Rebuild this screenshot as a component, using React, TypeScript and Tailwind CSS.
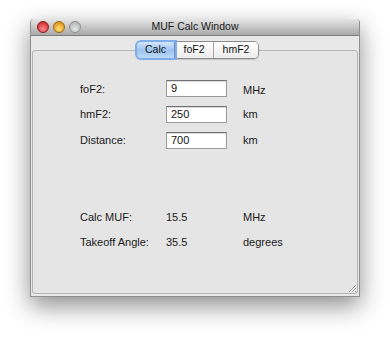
import React from "react";

const font = { fontFamily: '"Liberation Sans", Arial, sans-serif' };

function Light({ from, to, border }: { from: string; to: string; border: string }) {
  return (
    <div
      className="w-[12px] h-[12px] rounded-full border"
      style={{ background: `radial-gradient(circle at 50% 70%, ${to}, ${from})`, borderColor: border }}
    />
  );
}

function Field({ value }: { value: string }) {
  return (
    <div className="w-[61px] h-[17px] bg-white border border-[#9a9a9a] border-t-[#707070] shadow-[inset_0_1px_1px_rgba(0,0,0,0.15)] flex items-center px-[4px] text-[11px] text-[#111]">
      {value}
    </div>
  );
}

export default function App() {
  return (
    <div className="w-[390px] h-[339px] bg-white overflow-hidden" style={font}>
      <div className="ml-[30px] mt-[19px] w-[330px] h-[278px] flex flex-col bg-[#e8e8e8] rounded-t-[4px] shadow-[0_9px_24px_rgba(0,0,0,0.45)] border-x border-b border-[#8f8f8f]">
        {/* title bar */}
        <div className="h-[17px] relative flex items-center rounded-t-[4px] bg-gradient-to-b from-[#e6e6e6] to-[#a9a9a9] border-b border-[#7d7d7d]">
          <div className="flex gap-[4px] pl-[6px] items-center">
            <Light from="#c0141a" to="#ff8a8a" border="#8a1a1a" />
            <Light from="#d47e00" to="#ffe27a" border="#9a6a10" />
            <Light from="#a8a8a8" to="#e8e8e8" border="#8d8d8d" />
          </div>
          <div className="absolute inset-0 flex items-center justify-center text-[10.5px] text-[#1a1a1a]">
            MUF Calc Window
          </div>
        </div>
        {/* body */}
        <div className="flex-1 flex flex-col pt-[14px] px-[1px] pb-[2px]">
          <div className="relative flex-1 border border-[#b3b3b3] rounded-[3px] bg-[#e5e5e5]">
            {/* segmented tabs */}
            <div className="absolute left-[103px] -top-[10px] flex h-[18px] rounded-[5px] border border-[#8a8a8a] overflow-visible text-[10.5px] text-[#111] shadow-[0_1px_1px_rgba(0,0,0,0.15)]">
              <div className="w-[38px] flex items-center justify-center rounded-l-[4px] bg-gradient-to-b from-[#d4e6fa] via-[#9cc4f0] to-[#bcd9f8] ring-2 ring-[#7eadea] relative z-10 border-r border-[#6d8fbf]">
                Calc
              </div>
              <div className="w-[39px] flex items-center justify-center bg-gradient-to-b from-white to-[#ececec] border-r border-[#a5a5a5]">
                foF2
              </div>
              <div className="w-[44px] flex items-center justify-center rounded-r-[4px] bg-gradient-to-b from-white to-[#ececec]">
                hmF2
              </div>
            </div>

            <div className="pl-[47px] pt-[29px] flex flex-col text-[11px] text-[#1a1a1a]">
              <div className="flex flex-col gap-[9px]">
                <div className="flex items-center h-[17px]">
                  <div className="w-[86px] pt-[2px]">foF2:</div>
                  <Field value="9" />
                  <div className="ml-[16px] pt-[4px]">MHz</div>
                </div>
                <div className="flex items-center h-[17px]">
                  <div className="w-[86px]">hmF2:</div>
                  <Field value="250" />
                  <div className="ml-[16px]">km</div>
                </div>
                <div className="flex items-center h-[17px]">
                  <div className="w-[86px]">Distance:</div>
                  <Field value="700" />
                  <div className="ml-[16px]">km</div>
                </div>
              </div>
              <div className="mt-[62px] flex flex-col gap-[12px]">
                <div className="flex items-center h-[13px]">
                  <div className="w-[86px]">Calc MUF:</div>
                  <div className="w-[77px]">15.5</div>
                  <div>MHz</div>
                </div>
                <div className="flex items-center h-[13px]">
                  <div className="w-[86px]">Takeoff Angle:</div>
                  <div className="w-[77px]">35.5</div>
                  <div>degrees</div>
                </div>
              </div>
            </div>

            {/* resize grip */}
            <svg className="absolute right-[0px] bottom-[0px]" width="11" height="11" viewBox="0 0 11 11">
              <path d="M10 3 L3 10 M10 6 L6 10 M10 9 L9 10" stroke="#9a9a9a" strokeWidth="1" />
              <path d="M10 4 L4 10 M10 7 L7 10" stroke="#ffffff" strokeWidth="1" />
            </svg>
          </div>
        </div>
      </div>
    </div>
  );
}
